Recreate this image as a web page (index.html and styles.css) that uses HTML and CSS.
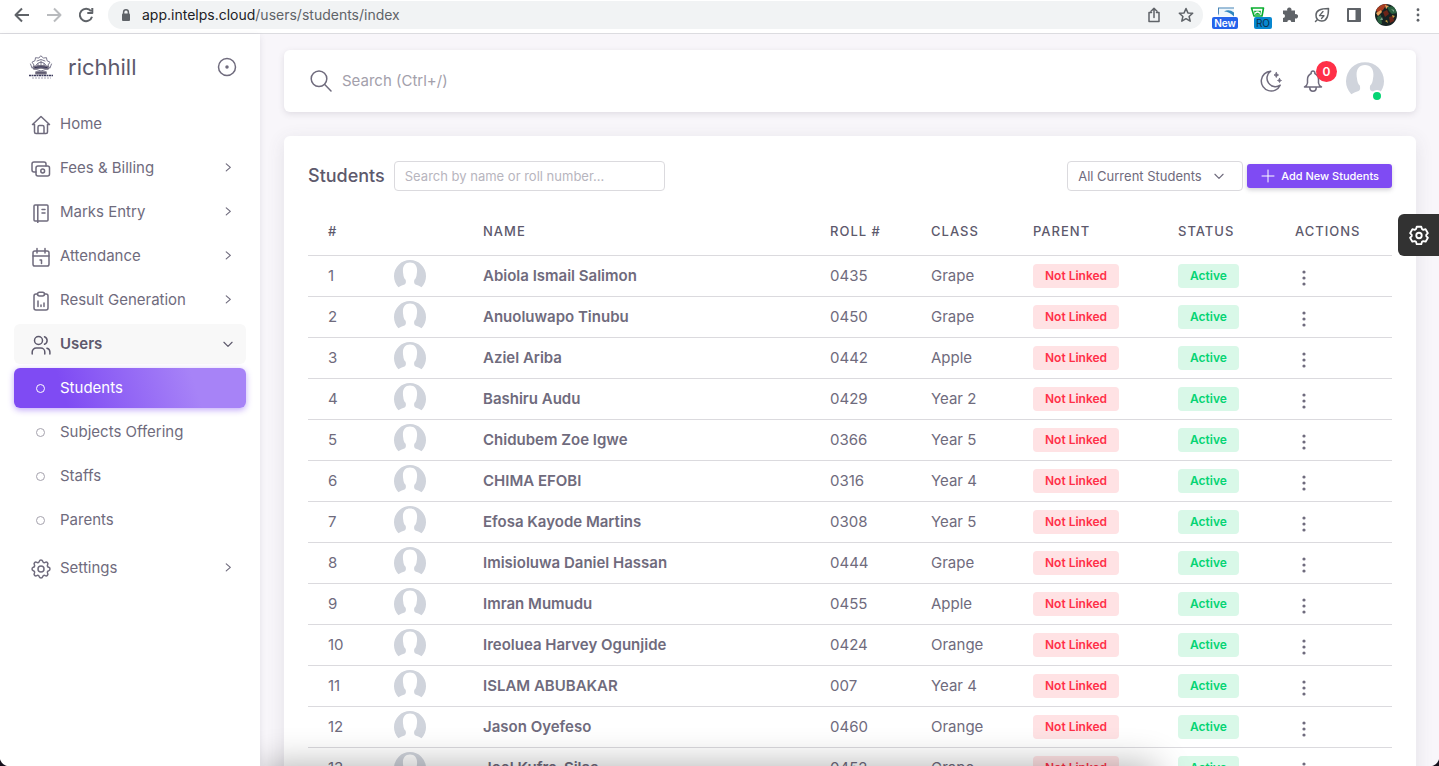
FILE: index.html
```html
<!DOCTYPE html>
<html lang="en">
<head>
<meta charset="utf-8">
<title>Students</title>
<link rel="stylesheet" href="styles.css">
</head>
<body>
<svg class="sprite" aria-hidden="true">
  <symbol id="chevron" viewBox="0 0 24 24"><path d="M9 5l7 6-7 6"/></symbol>
  <symbol id="chevron-down" viewBox="0 0 24 24"><path d="M5 9l7 7 7-7"/></symbol>
  <symbol id="dots" viewBox="0 0 4 16"><circle cx="2" cy="2" r="1.6"/><circle cx="2" cy="8" r="1.6"/><circle cx="2" cy="14" r="1.6"/></symbol>
  <symbol id="person" viewBox="0 0 38 38"><path fill="#d0d4dc" d="M5.300 32.300A19 19 0 1 1 32.700 32.300Q30 30.500 25.500 29C23.500 28 23.700 25.500 24.200 23.500C26 22 26.800 19 27 16.500C28.500 9 26 3 19 3S9.500 9 11 16.500C11.200 19 12 22 13.800 23.500C14.300 25.500 14.500 28 12.500 29Q8 30.500 5.300 32.300Z"/></symbol>
  <symbol id="gear" viewBox="2 2 20 20"><path d="M10.300 4.300c.4-1.700 2.900-1.700 3.400 0a1.700 1.700 0 0 0 2.500 1.100c1.600-1 3.400.8 2.400 2.400a1.700 1.700 0 0 0 1.100 2.500c1.700.4 1.700 2.900 0 3.400a1.700 1.700 0 0 0-1.100 2.500c1 1.600-.8 3.400-2.400 2.400a1.700 1.700 0 0 0-2.500 1.100c-.4 1.700-2.900 1.700-3.400 0a1.700 1.700 0 0 0-2.500-1.100c-1.600 1-3.400-.8-2.400-2.400a1.700 1.700 0 0 0-1.100-2.500c-1.700-.4-1.700-2.900 0-3.400a1.700 1.700 0 0 0 1.100-2.500c-1-1.600.8-3.400 2.400-2.400 1 .6 2.300.1 2.500-1.100z"/><circle cx="12" cy="12" r="3"/></symbol>
</svg>

<header class="browser">
  <div class="nav-buttons">
    <button class="tool" aria-label="Back"><svg class="i16 bold" viewBox="0 0 16 16"><path d="M15 8H2M8 1.500L1.500 8 8 14.500"/></svg></button>
    <button class="tool faded" aria-label="Forward"><svg class="i16 bold" viewBox="0 0 16 16"><path d="M1 8h13M8 1.500L14.500 8 8 14.500"/></svg></button>
    <button class="tool" aria-label="Reload"><svg class="i16 bold" viewBox="0 0 16 16"><path d="M13 4.200A6.200 6.200 0 1 0 14 9.700M14.300 1v5h-5"/></svg></button>
  </div>
  <div class="address">
    <svg class="lock" viewBox="0 0 10 12"><rect x="1" y="4.500" width="8" height="7.500" rx="1" fill="#5f6368" stroke="none"/><path d="M2.600 5V3.200a2.400 2.400 0 0 1 4.800 0V5"/></svg>
    <span class="url"><b>app.intelps.cloud</b>/users/students/index</span>
    <button class="tool" aria-label="Share"><svg class="i16" viewBox="0 0 16 16"><path d="M5.500 5.500H3v9h10v-9h-2.500M8 10.500V1.500M5 4.300l3-3 3 3"/></svg></button>
    <button class="tool" aria-label="Bookmark"><svg class="i16" viewBox="0 0 16 16"><path d="M8 1.500l1.900 4.400 4.800.4-3.600 3.200 1.100 4.700L8 11.700l-4.200 2.500 1.100-4.700L1.300 6.300l4.800-.4z"/></svg></button>
  </div>
  <div class="extensions">
    <button class="ext" aria-label="New extension"><svg class="ext-art" viewBox="0 0 16 9"><rect width="16" height="9" fill="#eef6fb"/><path d="M0 0h16v1H1v5L0 8z" fill="#4a86b8"/><path d="M6 4Q11 1 16 5v4Q11 4 6 4z" fill="#3187c0"/></svg><span class="tag blue">New</span></button>
    <button class="ext" aria-label="RO extension"><svg class="ext-art left" viewBox="0 0 16 10"><path d="M1.500 1h12l-1.500 8H4z" fill="none" stroke="#08ad2e" stroke-width="1.600"/><path d="M4 3.700h7l-.8 4H5z" fill="#08ad2e"/><path d="M5.500 6q2-2 4 0" stroke="#fff" fill="none"/></svg><span class="tag cyan">RO</span></button>
    <button class="tool" aria-label="Extensions"><svg class="i16 solid" viewBox="0 0 16 16"><path d="M1 3.500h4.300a2.200 2.200 0 1 1 4 0H13V7.300a2.200 2.200 0 1 1 0 4V15H9.300a2 2 0 1 0-4 0H1v-4a2 2 0 1 0 0-4z"/></svg></button>
    <button class="tool" aria-label="Energy saver"><svg class="i16" viewBox="0 0 16 16"><path d="M1.500 14.500l2-2A6.300 6.300 0 0 1 2 8c0-4 3-6.500 12.500-6.500C14.500 11 12 14 8 14a6.300 6.300 0 0 1-4.500-1.500"/><path d="M9 4.500L5.500 8.700h4.500L7.500 11.500" stroke-width="1.300"/></svg></button>
    <button class="tool" aria-label="Side panel"><svg class="i16" viewBox="0 0 16 16"><path d="M2 2h12v12H2z" stroke-width="2"/><path d="M9.500 1.500h5v13h-5z" fill="#5f6368" stroke="none"/></svg></button>
    <button class="tool" aria-label="Profile"><svg class="profile" viewBox="0 0 22 22"><defs><clipPath id="round"><circle cx="11" cy="11" r="11"/></clipPath></defs><g clip-path="url(#round)" stroke="none"><path fill="#172222" d="M0 0h22v22H0z"/><path fill="#a83c20" d="M0 5l8-5h4L8 6 3 9z"/><path fill="#e7a25c" d="M1 9l5-3 1 2-4 4zM10 1l4 1-3 3z"/><path fill="#29603f" d="M12 3l8-1 2 7-5 1-3-3zM2 13l4-2 1 9-4-1z"/><path fill="#7ea28a" d="M16 5l3 1v2zM5 16l2-3 1 3z"/><path fill="#6c2418" d="M8 8l4-2 2 4-4 3zM14 13l4-1 1 5-4 2z"/><path fill="#c8a040" d="M17 11l3 1-2 2zM10 17l2-1 1 3z"/></g></svg></button>
    <button class="tool" aria-label="Browser menu"><svg class="menu-dots solid"><use href="#dots"/></svg></button>
  </div>
</header>

<div class="app">
  <aside class="sidebar">
    <div class="brand">
      <svg class="crest" viewBox="0 0 24 24" aria-hidden="true"><g fill="none" stroke="#5b5872" stroke-width=".8"><path d="M12 1l2.500 2 3-.3.500 3 3 1.500-2 2.800 1.500 3-4 1.500L12 16l-4.500-1.500-4-1.500L5 10 3 7.200 6 5.700l.5-3 3 .3z"/><path d="M7 10q5-6 10 0M8 6l4-1.500L16 6M9 11V8.500m3 2.500V6m3 5V8.500M1.500 9l1.500 4M22.500 9L21 13"/></g><path fill="#28284e" d="M5 11.500q7-1.500 14 0V14q-7-2-14 0zM7 17h10v1.800H7z"/><path stroke="#3c3b5d" stroke-width="1.500" stroke-dasharray="2 .5" stroke-linecap="butt" d="M0 20.500h24"/><path stroke="#a5a3b5" stroke-width="1" stroke-dasharray="2 1" stroke-linecap="butt" d="M3 23h19"/></svg>
      <span class="brand-name">richhill</span>
      <button class="pin" aria-label="Collapse menu"><svg class="i20" viewBox="0 0 20 20"><circle cx="10" cy="10" r="8.500"/><circle cx="10" cy="10" r="1" fill="currentColor"/></svg></button>
    </div>
    <nav class="menu">
      <a class="item" href="#"><svg class="i20" viewBox="0 0 20 20"><path d="M3.500 9.500H1.500L10 1.500l8.500 8h-2M3.500 9.500V17a1.500 1.500 0 0 0 1.500 1.500h10a1.500 1.500 0 0 0 1.500-1.500V9.500M7 18.500V12q0-1.500 1.500-1.500h3Q13 10.500 13 12v6.500"/></svg><span>Home</span></a>
      <a class="item" href="#"><svg class="i20" viewBox="0 0 20 20"><rect x="5" y="7" width="13.500" height="10" rx="2"/><path d="M15 7V5a2 2 0 0 0-2-2H3a2 2 0 0 0-2 2v6a2 2 0 0 0 2 2h2"/><circle cx="11.700" cy="12" r="1.900"/></svg><span>Fees &amp; Billing</span><svg class="arrow"><use href="#chevron"/></svg></a>
      <a class="item" href="#"><svg class="i20" viewBox="0 0 20 20"><path d="M4 2h12a1 1 0 0 1 1 1v14a1 1 0 0 1-1 1H4a1 1 0 0 1-1-1V3a1 1 0 0 1 1-1zM6.800 2v17.500M11 6.500h3M11 10h3"/></svg><span>Marks Entry</span><svg class="arrow"><use href="#chevron"/></svg></a>
      <a class="item" href="#"><svg class="i20" viewBox="0 0 20 20"><rect x="2" y="4" width="16" height="15" rx="1.800"/><path d="M6 1.500V6M14 1.500V6M2 9h16M9 13h1.500v3.500"/></svg><span>Attendance</span><svg class="arrow"><use href="#chevron"/></svg></a>
      <a class="item" href="#"><svg class="i20" viewBox="0 0 20 20"><path d="M6.500 3H5a2 2 0 0 0-2 2v12a2 2 0 0 0 2 2h10a2 2 0 0 0 2-2V5a2 2 0 0 0-2-2h-1.500"/><rect x="6.500" y="1.200" width="7" height="3.800" rx="1.900"/><path d="M7 15.500V10M10 15.500V14M13 15.500V12"/></svg><span>Result Generation</span><svg class="arrow"><use href="#chevron"/></svg></a>
      <a class="item open" href="#"><svg class="i20" viewBox="0 0 20 20"><circle cx="7.500" cy="5.500" r="4"/><path d="M1.200 19v-2a4 4 0 0 1 4-4h4.600a4 4 0 0 1 4 4v2M13.500 1.800a4 4 0 0 1 0 7.500M18.900 19v-2a4 4 0 0 0-3-3.800"/></svg><span>Users</span><svg class="arrow"><use href="#chevron-down"/></svg></a>
      <a class="item sub active" href="#"><i class="ring"></i><span>Students</span></a>
      <a class="item sub" href="#"><i class="ring"></i><span>Subjects Offering</span></a>
      <a class="item sub" href="#"><i class="ring"></i><span>Staffs</span></a>
      <a class="item sub last" href="#"><i class="ring"></i><span>Parents</span></a>
      <a class="item" href="#"><svg class="i20"><use href="#gear"/></svg><span>Settings</span><svg class="arrow"><use href="#chevron"/></svg></a>
    </nav>
  </aside>

  <main class="main">
    <div class="topbar">
      <label class="search"><svg class="i22" viewBox="0 0 22 22"><circle cx="9" cy="8.800" r="7.800"/><path d="M14.700 14.500L21 21"/></svg><input type="search" placeholder="Search (Ctrl+/)" aria-label="Search"></label>
      <button class="icon-btn" aria-label="Dark mode"><svg class="i22" viewBox="0 0 22 22"><path d="M10.700 1.200a9.900 9.900 0 1 0 9.500 14A8.300 8.300 0 0 1 10.700 1.200z"/><path fill="currentColor" stroke-width=".8" d="M16.300 2.500q.3 2.200 2.300 2.500-2 .3-2.300 2.500Q16 5.300 14 5q2-.3 2.300-2.500zM19.500 8.500q.2 1.800 2 2-1.800.2-2 2-.2-1.800-2-2 1.800-.2 2-2z"/></svg></button>
      <button class="icon-btn bell" aria-label="Notifications"><svg class="i22" viewBox="0 0 22 22"><path d="M9.200 3.500a1.900 1.900 0 1 1 3.600 0A6.600 6.600 0 0 1 16.500 9.500V13q.3 2.500 3 4H2.500q2.700-1.500 3-4V9.500A6.600 6.600 0 0 1 9.200 3.500zM7.800 17.300v.7a3.200 3.200 0 0 0 6.400 0v-.7"/></svg><span class="count">0</span></button>
      <button class="user" aria-label="Account"><svg class="user-pic"><use href="#person"/></svg><i class="online"></i></button>
    </div>

    <section class="card">
      <div class="card-head">
        <h1 class="title">Students</h1>
        <input class="filter" type="text" placeholder="Search by name or roll number..." aria-label="Search by name or roll number">
        <div class="select"><select aria-label="Student group"><option>All Current Students</option></select><svg class="select-arrow"><use href="#chevron-down"/></svg></div>
        <button class="add"><svg class="plus" viewBox="0 0 14 14"><path d="M7 1v12M1 7h12"/></svg>Add New Students</button>
      </div>
      <table class="students">
        <colgroup><col class="c-num"><col class="c-pic"><col><col class="c-roll"><col class="c-class"><col class="c-parent"><col class="c-status"><col class="c-act"></colgroup>
        <thead><tr><th>#</th><th></th><th>Name</th><th>Roll #</th><th>Class</th><th>Parent</th><th>Status</th><th>Actions</th></tr></thead>
        <tbody>
          <tr><td>1</td><td><svg class="pic"><use href="#person"/></svg></td><td class="name">Abiola Ismail Salimon</td><td>0435</td><td>Grape</td><td><span class="badge red">Not Linked</span></td><td><span class="badge green">Active</span></td><td><button class="more" aria-label="Actions"><svg><use href="#dots"/></svg></button></td></tr>
          <tr><td>2</td><td><svg class="pic"><use href="#person"/></svg></td><td class="name">Anuoluwapo Tinubu</td><td>0450</td><td>Grape</td><td><span class="badge red">Not Linked</span></td><td><span class="badge green">Active</span></td><td><button class="more" aria-label="Actions"><svg><use href="#dots"/></svg></button></td></tr>
          <tr><td>3</td><td><svg class="pic"><use href="#person"/></svg></td><td class="name">Aziel Ariba</td><td>0442</td><td>Apple</td><td><span class="badge red">Not Linked</span></td><td><span class="badge green">Active</span></td><td><button class="more" aria-label="Actions"><svg><use href="#dots"/></svg></button></td></tr>
          <tr><td>4</td><td><svg class="pic"><use href="#person"/></svg></td><td class="name">Bashiru Audu</td><td>0429</td><td>Year 2</td><td><span class="badge red">Not Linked</span></td><td><span class="badge green">Active</span></td><td><button class="more" aria-label="Actions"><svg><use href="#dots"/></svg></button></td></tr>
          <tr><td>5</td><td><svg class="pic"><use href="#person"/></svg></td><td class="name">Chidubem Zoe Igwe</td><td>0366</td><td>Year 5</td><td><span class="badge red">Not Linked</span></td><td><span class="badge green">Active</span></td><td><button class="more" aria-label="Actions"><svg><use href="#dots"/></svg></button></td></tr>
          <tr><td>6</td><td><svg class="pic"><use href="#person"/></svg></td><td class="name">CHIMA EFOBI</td><td>0316</td><td>Year 4</td><td><span class="badge red">Not Linked</span></td><td><span class="badge green">Active</span></td><td><button class="more" aria-label="Actions"><svg><use href="#dots"/></svg></button></td></tr>
          <tr><td>7</td><td><svg class="pic"><use href="#person"/></svg></td><td class="name">Efosa Kayode Martins</td><td>0308</td><td>Year 5</td><td><span class="badge red">Not Linked</span></td><td><span class="badge green">Active</span></td><td><button class="more" aria-label="Actions"><svg><use href="#dots"/></svg></button></td></tr>
          <tr><td>8</td><td><svg class="pic"><use href="#person"/></svg></td><td class="name">Imisioluwa Daniel Hassan</td><td>0444</td><td>Grape</td><td><span class="badge red">Not Linked</span></td><td><span class="badge green">Active</span></td><td><button class="more" aria-label="Actions"><svg><use href="#dots"/></svg></button></td></tr>
          <tr><td>9</td><td><svg class="pic"><use href="#person"/></svg></td><td class="name">Imran Mumudu</td><td>0455</td><td>Apple</td><td><span class="badge red">Not Linked</span></td><td><span class="badge green">Active</span></td><td><button class="more" aria-label="Actions"><svg><use href="#dots"/></svg></button></td></tr>
          <tr><td>10</td><td><svg class="pic"><use href="#person"/></svg></td><td class="name">Ireoluea Harvey Ogunjide</td><td>0424</td><td>Orange</td><td><span class="badge red">Not Linked</span></td><td><span class="badge green">Active</span></td><td><button class="more" aria-label="Actions"><svg><use href="#dots"/></svg></button></td></tr>
          <tr><td>11</td><td><svg class="pic"><use href="#person"/></svg></td><td class="name">ISLAM ABUBAKAR</td><td>007</td><td>Year 4</td><td><span class="badge red">Not Linked</span></td><td><span class="badge green">Active</span></td><td><button class="more" aria-label="Actions"><svg><use href="#dots"/></svg></button></td></tr>
          <tr><td>12</td><td><svg class="pic"><use href="#person"/></svg></td><td class="name">Jason Oyefeso</td><td>0460</td><td>Orange</td><td><span class="badge red">Not Linked</span></td><td><span class="badge green">Active</span></td><td><button class="more" aria-label="Actions"><svg><use href="#dots"/></svg></button></td></tr>
          <tr><td>13</td><td><svg class="pic"><use href="#person"/></svg></td><td class="name">Joel Kufre-Silas</td><td>0452</td><td>Grape</td><td><span class="badge red">Not Linked</span></td><td><span class="badge green">Active</span></td><td><button class="more" aria-label="Actions"><svg><use href="#dots"/></svg></button></td></tr>
        </tbody>
      </table>
    </section>
    <div class="edge-shadow"></div>
  </main>
  <button class="customizer" aria-label="Customize"><svg class="i22" viewBox="0 0 24 24"><path d="M9.500 3h5l.7 2.500 1.500.9 2.500-.7 2.500 4.300-1.800 1.800v1.400l1.800 1.800-2.500 4.300-2.500-.7-1.500.9-.7 2.500h-5l-.7-2.500-1.500-.9-2.500.7L2.300 15l1.800-1.800v-1.400L2.300 10l2.500-4.300 2.500.7 1.500-.9z"/><circle cx="12" cy="12.500" r="3"/></svg></button>
  <div class="corner bl"></div>
  <div class="corner br"></div>
</div>
</body>
</html>
```
FILE: styles.css
```css
* { box-sizing: border-box; }

body {
  margin: 0;
  height: 100vh;
  display: flex;
  flex-direction: column;
  overflow: hidden;
  background: #f8f6fa;
  color: #6f6b7d;
  font: 15px/22px Inter, "Open Sans", sans-serif;
}

button {
  margin: 0;
  padding: 0;
  border: 0;
  background: none;
  color: inherit;
  font: inherit;
  flex: none;
}

input, select { font: inherit; color: inherit; outline: 0; }
a { color: inherit; text-decoration: none; }

svg {
  display: block;
  flex: none;
  fill: none;
  stroke: currentColor;
  stroke-width: 1.5;
  stroke-linecap: round;
  stroke-linejoin: round;
}

.sprite { position: absolute; width: 0; height: 0; }
.i16 { width: 16px; height: 16px; }
.i20 { width: 20px; height: 20px; }
.i22 { width: 22px; height: 22px; }
.bold { stroke-width: 2; stroke-linecap: butt; }
.solid { fill: currentColor; stroke: none; }

/* Browser bar */
.browser {
  flex: none;
  display: flex;
  align-items: center;
  height: 34px;
  padding-bottom: 3px;
  background: #fff;
  border-bottom: 1px solid #dcdce0;
  color: #5f6368;
}

.nav-buttons { display: flex; gap: 16px; padding: 0 14px; }
.faded { color: #b9bbbe; }

.address {
  flex: 1;
  display: flex;
  align-items: center;
  gap: 16px;
  height: 28px;
  padding: 0 9px 0 13px;
  border-radius: 14px;
  background: #f1f3f4;
}

.lock { width: 10px; height: 12px; margin-right: -5px; }
.url { flex: 1; font-size: 14px; line-height: 20px; }
.url b { font-weight: 400; color: #202124; }

.extensions { display: flex; align-items: center; gap: 16px; padding: 0 19px 0 11px; }
.ext { position: relative; width: 24px; height: 24px; margin-right: -6px; }
.ext-art { width: 16px; height: 10px; margin: 4px auto 10px; stroke: none; }
.ext-art.left { margin-left: 2px; }

.tag {
  position: absolute;
  right: 0;
  bottom: -2px;
  padding: 0 2px;
  border-radius: 2px;
  font-size: 10px;
  line-height: 12px;
}
.blue { background: #2563eb; color: #fff; font-weight: 600; }
.cyan { background: #0787d0; color: #103048; }
.profile { width: 22px; height: 22px; margin: 0 -3px; }
.menu-dots { width: 4px; height: 14px; margin-left: 6px; }

/* Sidebar */
.app { position: relative; flex: 1; min-height: 0; display: flex; }

.sidebar {
  position: relative;
  z-index: 2;
  flex: 0 0 260px;
  background: #fff;
  box-shadow: 0 2px 6px rgba(75, 70, 92, 0.12);
}

.brand { display: flex; align-items: center; height: 66px; padding: 0 23px 0 29px; }
.crest { width: 24px; height: 24px; }
.brand-name { flex: 1; padding-left: 15px; font-size: 22px; line-height: 28px; color: #5d596c; }
.pin { color: #6f6b7d; }

.menu { display: flex; flex-direction: column; gap: 4px; padding: 4px 14px; }

.item {
  display: flex;
  align-items: center;
  gap: 9px;
  height: 40px;
  padding: 0 11px 0 17px;
  border-radius: 6px;
}
.item span { flex: 1; }
.item .i20 { margin-top: 2px; }
.arrow { width: 14px; height: 14px; stroke-width: 2; }
.open { background: #f8f8f8; color: #5d596c; font-weight: 600; }
.ring { width: 9px; height: 9px; margin: 0 6px 0 5px; border: 1px solid #a5a2ad; border-radius: 50%; }
.active {
  color: #fff;
  background: linear-gradient(72deg, #7f4bf3 22%, #a783f7 77%);
  box-shadow: 0 2px 6px rgba(127, 75, 243, 0.48);
}
.active .ring { border-color: #fff; }
.last { margin-bottom: 4px; }

/* Main column */
.main {
  position: relative;
  flex: 1;
  min-width: 0;
  padding: 16px 23px 0 24px;
  overflow: hidden;
}

.topbar {
  display: flex;
  align-items: center;
  height: 62px;
  padding: 0 32px 0 26px;
  border-radius: 6px;
  background: #fff;
  box-shadow: 0 2px 6px rgba(75, 70, 92, 0.14);
}

.search { flex: 1; display: flex; align-items: center; gap: 10px; }
.search input { flex: 1; padding: 0; border: 0; background: none; }
.search input::placeholder { color: #a3a0ab; opacity: 1; }
.icon-btn { position: relative; margin-right: 20px; }

.count {
  position: absolute;
  left: 14px;
  bottom: 10px;
  width: 21px;
  height: 21px;
  border-radius: 50%;
  background: #ff3048;
  color: #fff;
  font-size: 12px;
  line-height: 21px;
  font-weight: 600;
  text-align: center;
}

.user { position: relative; margin-left: 2px; }
.user-pic { width: 38px; height: 38px; stroke: none; }
.online {
  position: absolute;
  right: 1px;
  bottom: -2px;
  width: 12px;
  height: 12px;
  border: 2px solid #fff;
  border-radius: 50%;
  background: #05d473;
}

.card {
  margin-top: 24px;
  padding: 24px;
  border-radius: 6px;
  background: #fff;
  box-shadow: 0 4px 18px rgba(75, 70, 92, 0.12);
}

.card-head { display: flex; align-items: center; height: 32px; margin-bottom: 15px; }
.title { margin: 0 9px 0 0; font-size: 18px; line-height: 24px; font-weight: 500; color: #5d596c; }

.filter {
  width: 271px;
  height: 30px;
  padding: 0 10px;
  border: 1px solid #dbdade;
  border-radius: 4px;
  font-size: 13px;
}
.filter::placeholder { color: #b7b5be; opacity: 1; }

.select { position: relative; margin: 0 4px 0 auto; }
.select select {
  width: 176px;
  height: 30px;
  padding: 0 10px;
  appearance: none;
  border: 1px solid #dbdade;
  border-radius: 4px;
  background: #fff;
  font-size: 13px;
}
.select-arrow { position: absolute; top: 8px; right: 17px; width: 14px; height: 14px; stroke-width: 2; pointer-events: none; }

.add {
  display: flex;
  align-items: center;
  gap: 6px;
  height: 24px;
  padding: 0 13px 0 14px;
  border-radius: 3px;
  background: #7f4bf3;
  color: #fff;
  font-size: 11px;
  font-weight: 500;
  box-shadow: 0 2px 4px rgba(75, 70, 92, 0.25);
}
.plus { width: 14px; height: 14px; stroke-width: 1; }

/* Student table */
.students { width: 100%; table-layout: fixed; border-collapse: collapse; }
.c-num { width: 66px; }
.c-pic { width: 89px; }
.c-roll { width: 101px; }
.c-class { width: 102px; }
.c-parent { width: 145px; }
.c-status, .c-act { width: 117px; }

.students th, .students td {
  padding: 0 0 0 20px;
  border-bottom: 1px solid #dbdade;
  text-align: left;
  white-space: nowrap;
}
.students th {
  height: 48px;
  color: #5d596c;
  font-size: 13px;
  font-weight: 500;
  letter-spacing: 1px;
  text-transform: uppercase;
}
.students td { height: 41px; }
.students .name { font-weight: 600; }
.pic { width: 32px; height: 32px; stroke: none; }

.badge {
  display: inline-block;
  padding: 0 12px;
  border-radius: 4px;
  font-size: 12px;
  line-height: 24px;
  font-weight: 600;
  vertical-align: middle;
}
.red { background: #ffe2e4; color: #ff3048; }
.green { background: #d9f8e8; color: #05d473; }

.more { display: block; padding: 4px 7px 0; }
.more svg { width: 4px; height: 16px; fill: currentColor; stroke: none; }

/* Layers over the page */
.edge-shadow {
  position: absolute;
  top: 100%;
  left: 0;
  width: 76%;
  height: 80px;
  box-shadow: 0 0 36px rgba(0, 0, 0, 0.32);
}

.customizer {
  position: absolute;
  z-index: 3;
  top: 180px;
  right: 0;
  padding: 10px 9px 10px 10px;
  border-radius: 6px 0 0 6px;
  background: #323232;
  color: #fff;
}
.customizer svg { stroke-width: 2; }

.corner { position: absolute; z-index: 4; bottom: 0; width: 10px; height: 10px; }
.bl { left: 0; background: radial-gradient(circle at 100% 0, transparent 10px, #15101c 11px); }
.br { right: 0; background: radial-gradient(circle at 0 0, transparent 10px, #15101c 11px); }
```
